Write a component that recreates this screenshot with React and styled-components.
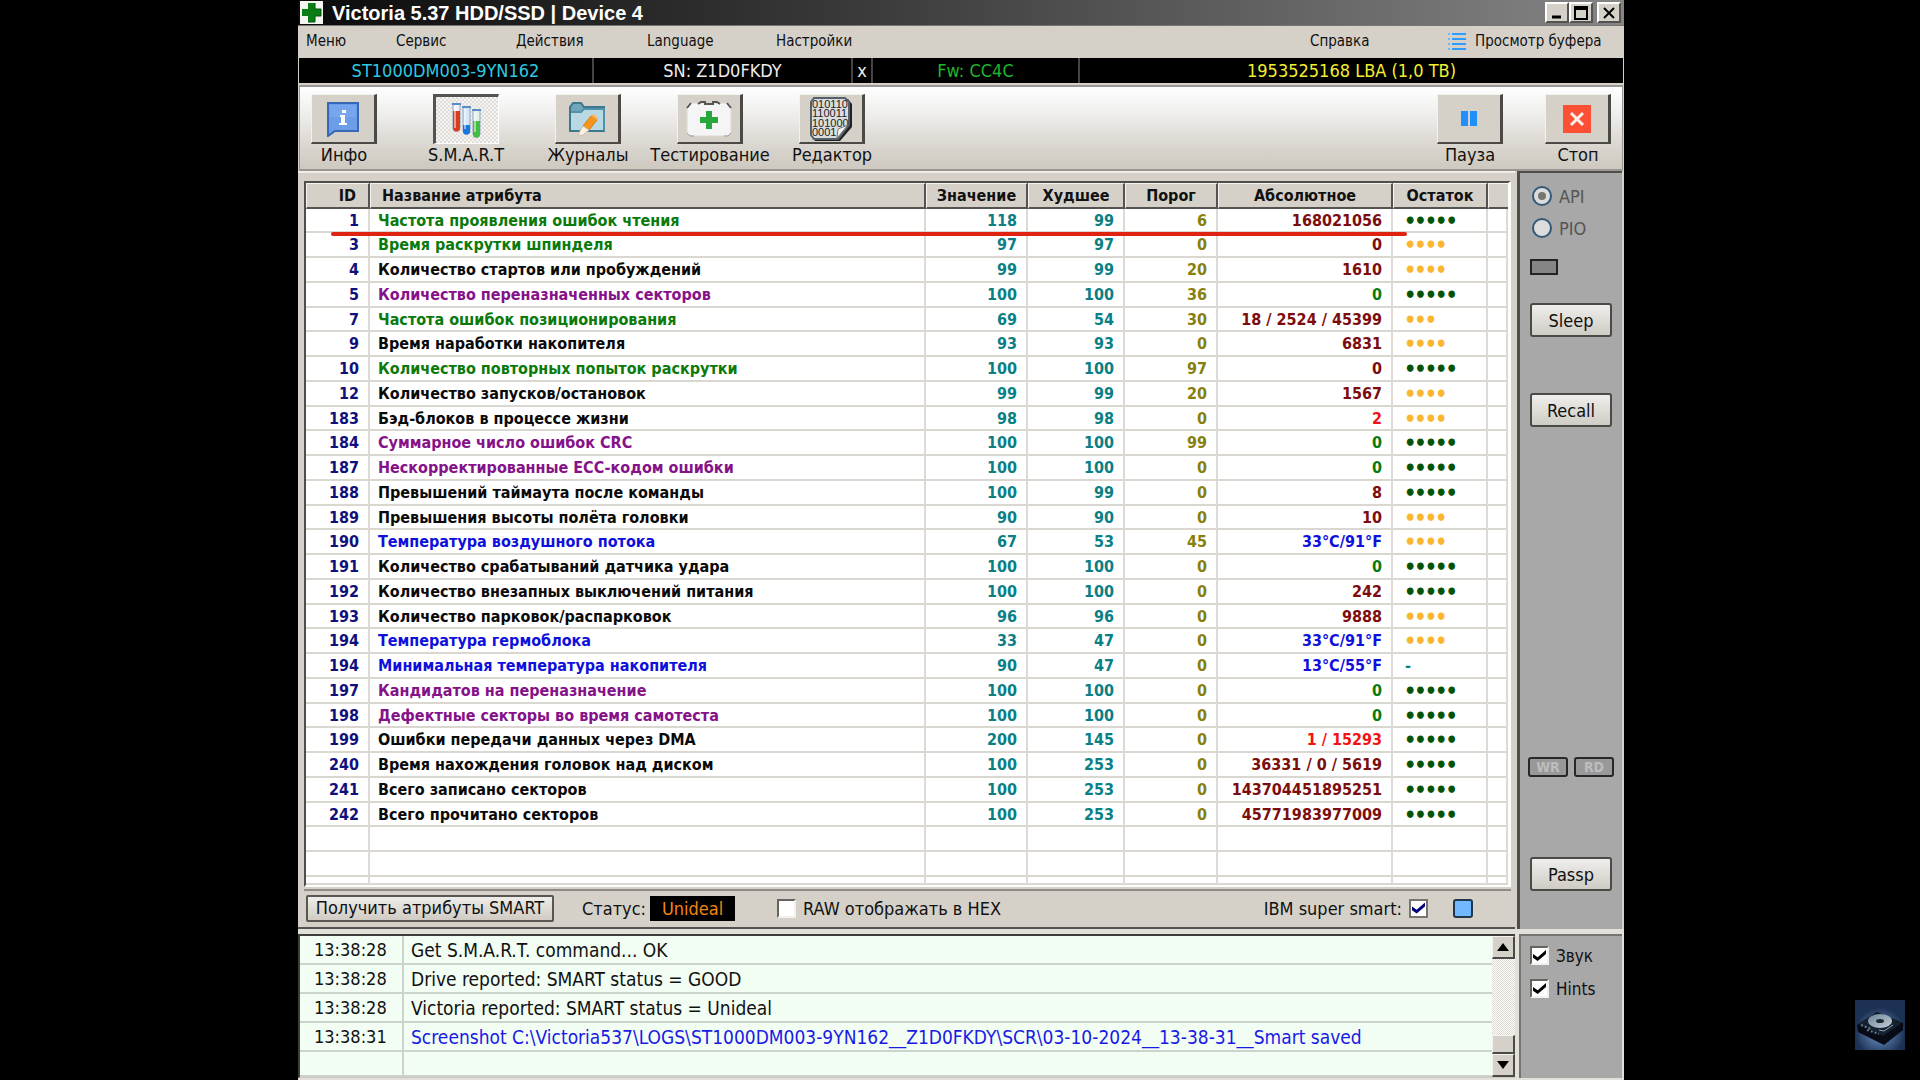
import React from "react";
import styled, { createGlobalStyle, css } from "styled-components";

const GlobalStyle = createGlobalStyle`
  * {
    box-sizing: border-box;
  }
  body {
    margin: 0;
    background: #000;
    color: #111;
    font-family: "DejaVu Sans Condensed", "DejaVu Sans", sans-serif;
    font-size: 18px;
  }
  button, input {
    font: inherit;
    color: inherit;
    margin: 0;
    padding: 0;
  }
`;

const Desktop = styled.div`
  display: grid;
  grid-template-columns: 298px minmax(0, 1fr) 296px;
  min-height: 100vh;
`;

const Window = styled.main`
  grid-column: 2;
  display: flex;
  flex-direction: column;
  background: #d5d1c9;
`;

const Corner = styled.aside`
  display: flex;
  align-items: flex-end;
  justify-content: flex-end;
  padding: 0 15px 30px 0;
`;

/* title bar */

const TitleBar = styled.header`
  display: flex;
  align-items: center;
  height: 26px;
  padding: 0 3px 0 2px;
  background: linear-gradient(90deg, #0b0b0b, #3c3c3c 44%, #858585);
  border-bottom: 1px solid #77756f;
`;

const Title = styled.h1`
  flex: 1;
  margin: 0 0 0 9px;
  color: #fff;
  font-family: "Liberation Sans", Arial, sans-serif;
  font-size: 20px;
  line-height: 24px;
`;

const WinButton = styled.button`
  width: 24px;
  height: 21px;
  margin-left: ${p => (p.$apart ? "4px" : "0")};
  display: grid;
  place-items: center;
  background: #d5d1c9;
  border: 2px solid;
  border-color: #fff #55534f #55534f #fff;
`;

/* menu */

const MenuBar = styled.nav`
  display: grid;
  grid-template-columns: 90px 120px 131px 129px 1fr 137px 177px;
  align-items: center;
  height: 32px;
  padding: 0 0 2px 8px;
`;

const MenuItem = styled.button`
  display: flex;
  align-items: center;
  gap: 9px;
  border: 0;
  background: none;
  font-size: 15px;
  line-height: 20px;
  white-space: nowrap;
`;

/* drive line */

const DriveBar = styled.div`
  display: grid;
  grid-template-columns: 293fr 257fr 18fr 205fr 543fr;
  gap: 2px;
  height: 25px;
  margin: 0 1px;
  background: #444;
`;

const DriveCell = styled.div`
  background: #000;
  color: ${p => p.$color};
  text-align: center;
  line-height: 25px;
`;

const ClearButton = styled.button`
  border: 0;
  background: #000;
  color: #eee;
  line-height: 22px;
`;

/* toolbar */

const Toolbar = styled.div`
  display: flex;
  justify-content: space-between;
  height: 86px;
  margin: 2px 1px 0;
  padding: 7px 11px 0 11px;
  border: solid #9a9894;
  border-width: 2px 1px;
  background: linear-gradient(#fff, #eeedec 35%, #dcd8d2 68%, #cdc9bf);
`;

const ToolGroup = styled.div`
  display: flex;
  gap: ${p => p.$gap}px;
`;

const Tool = styled.label`
  display: flex;
  flex-direction: column;
  align-items: center;
  width: 66px;
  line-height: 21px;
  white-space: nowrap;
`;

const ToolButton = styled.button`
  flex: none;
  display: grid;
  place-items: center;
  width: 66px;
  height: 50px;
  background: #d5d1c9;
  border: solid;
  border-width: 1px 3px 2px 1px;
  border-color: #f4f2ee #4b4a47 #4b4a47 #f4f2ee;
  ${p =>
    p.$down &&
    css`
      background: repeating-conic-gradient(#f4f3f1 0 25%, #e2dfda 0 50%) 0 0 / 4px 4px;
      border-width: 3px 1px 1px 3px;
      border-color: #55534f #fff #fff #55534f;
    `}
`;

/* main part */

const Body = styled.div`
  flex: 1;
  display: flex;
  gap: 2px;
  padding-right: 2px;
`;

const Main = styled.section`
  flex: 1;
  min-width: 0;
  display: flex;
  flex-direction: column;
  border-top: 2px solid #f0ede2;
  border-bottom: 2px solid #55534f;
  padding: 8px 4px 0 6px;
`;

const TableFrame = styled.div`
  position: relative;
  overflow: hidden;
  border: 2px solid;
  border-color: #504e4b #fdfdfb #fdfdfb #504e4b;
  border-right-width: 3px;
  background: #fff;
`;

const Underline = styled.div`
  position: absolute;
  top: 49px;
  left: 25px;
  right: 101px;
  height: 4px;
  border-radius: 2px;
  background: #e02311;
`;

const Table = styled.table`
  width: 100%;
  table-layout: fixed;
  border-collapse: separate;
  border-spacing: 0;
  font-size: 16px;
  font-weight: bold;
`;

const Col = styled.col`
  width: ${p => (p.$w ? `${p.$w}px` : "auto")};
`;

const Th = styled.th`
  height: 26px;
  padding: ${p => p.$pad || "0"};
  text-align: ${p => p.$align || "center"};
  line-height: 20px;
  color: #111;
  background: #d5d1c9;
  border: solid;
  border-width: 1px 2px 2px 1px;
  border-color: #f5f3ef #55534f #55534f #f5f3ef;
  &:last-child {
    border-right: 0;
  }
`;

const Row = styled.tr`
  height: 25px;
  &:nth-child(4n + 1) {
    height: 24px;
  }
  &:last-child {
    height: 8px;
  }
`;

const Td = styled.td`
  padding: ${p => (p.$left ? `1px 0 0 ${p.$left}px` : "1px 9px 0 0")};
  text-align: ${p => (p.$left ? "left" : "right")};
  line-height: 20px;
  white-space: nowrap;
  color: ${p => p.$color};
  border-right: 2px solid #dedbd6;
  border-bottom: 2px solid #dad7d1;
`;

const Dots = styled.span`
  display: block;
  font-size: 18px;
  line-height: 20px;
  -webkit-text-stroke: 1px currentColor;
`;

const Strip = styled.div`
  display: flex;
  align-items: center;
  height: 36px;
  margin-top: 2px;
  border-top: 2px solid #8f8d88;
  white-space: nowrap;
`;

const GetButton = styled.button`
  height: 27px;
  width: 248px;
  margin-left: 2px;
  border: 2px solid #595753;
  border-radius: 2px;
  background: linear-gradient(#efedea, #cfcbc3);
  line-height: 22px;
`;

const Status = styled.div`
  display: flex;
  align-items: center;
  gap: 4px;
  margin-left: 28px;
`;

const StatusValue = styled.output`
  width: 85px;
  background: #000;
  color: #f58410;
  text-align: center;
  line-height: 25px;
`;

const RawLabel = styled.label`
  flex: 1;
  display: flex;
  align-items: center;
  gap: 7px;
  margin-left: 42px;
`;

const SuperLabel = styled.label`
  display: flex;
  align-items: center;
  gap: 7px;
`;

const Check = styled.input`
  appearance: none;
  flex: none;
  display: grid;
  place-items: center;
  width: 19px;
  height: 19px;
  background: #fff;
  border: 2px solid;
  border-color: ${p =>
    p.$flat ? "#77756f" : "#66645f #f3f1ee #f3f1ee #66645f"};
  &:checked::before {
    content: "";
    width: 13px;
    height: 11px;
    background: ${p => (p.$flat ? "#00007c" : "#000")};
    clip-path: polygon(0 36%, 36% 66%, 100% 0, 100% 36%, 36% 100%, 0 70%);
  }
`;

const BlueButton = styled.button`
  width: 20px;
  height: 19px;
  margin: 0 38px 0 25px;
  border: 2px solid #20384e;
  border-radius: 3px;
  background: #72b8ff;
`;

/* right column */

const Side = styled.aside`
  width: 105px;
  display: flex;
  flex-direction: column;
  padding: 7px 10px 0 10px;
  background: #a8a8a8;
  border: solid #4e4d4b;
  border-width: 2px 0 0 3px;
`;

const RadioLabel = styled.label`
  display: flex;
  align-items: center;
  gap: 7px;
  height: 32px;
  padding-left: 2px;
  color: #555;
`;

const Radio = styled.input`
  appearance: none;
  display: grid;
  place-items: center;
  width: 20px;
  height: 20px;
  border: 2px solid #31587a;
  border-radius: 50%;
  background: #dcdcda;
  &:checked::before {
    content: "";
    width: 8px;
    height: 8px;
    border-radius: 50%;
    background: #77756f;
  }
`;

const Led = styled.div`
  width: 28px;
  height: 16px;
  margin: 15px 0 28px;
  border: 2px solid #222;
  background: #858585;
`;

const SideButton = styled.button`
  height: 34px;
  margin-bottom: ${p => p.$after || 0}px;
  border: 2px solid #4b4a47;
  border-radius: 3px;
  background: linear-gradient(#efeeeb, #cfccc5);
`;

const Lamps = styled.div`
  display: flex;
  justify-content: space-between;
  margin: auto -2px 80px -2px;
`;

const Lamp = styled.span`
  width: 40px;
  height: 20px;
  border: 2px solid #27282a;
  border-radius: 3px;
  background: #999;
  color: #bdbdbd;
  font-size: 14px;
  font-weight: bold;
  line-height: 17px;
  text-align: center;
`;

/* log */

const Bottom = styled.div`
  display: flex;
  gap: 4px;
  height: 151px;
  padding: 5px 2px 2px 0;
  background: #e3e0da;
`;

const LogFrame = styled.section`
  flex: 1;
  min-width: 0;
  display: flex;
  border: 2px solid #3f3e3c;
  border-right-width: 0;
  border-bottom: 1px solid #c9c6bf;
  background: #f2fdf4;
`;

const LogTable = styled.table`
  flex: 1;
  width: 100%;
  table-layout: fixed;
  border-collapse: separate;
  border-spacing: 0;
`;

const LogRow = styled.tr`
  height: ${p => (p.$short ? 25 : 29)}px;
`;

const LogCell = styled.td`
  padding: 0 0 0 ${p => (p.$time ? 14 : 7)}px;
  border-bottom: 2px solid #ccd3cc;
  border-right: ${p => (p.$time ? "2px solid #ccd3cc" : "0")};
  color: ${p => (p.$link ? "#1a1ae6" : "#111")};
  font-size: ${p => (p.$time ? 18 : 19)}px;
  line-height: 22px;
  white-space: nowrap;
`;

const Scroll = styled.div`
  display: flex;
  flex-direction: column;
  width: 23px;
  background: repeating-conic-gradient(#fff 0 25%, #dcd9d3 0 50%) 0 0 / 2px 2px;
`;

const ScrollButton = styled.button`
  height: ${p => (p.$thumb ? 19 : 23)}px;
  margin-top: ${p => (p.$thumb ? "auto" : "0")};
  display: grid;
  place-items: center;
  background: #d5d1c9;
  border: solid;
  border-width: 1px 2px 2px 1px;
  border-color: #f5f3ef #4b4a47 #4b4a47 #f5f3ef;
`;

const Options = styled.aside`
  width: 103px;
  padding: 3px 0 0 9px;
  background: #a8a8a8;
  border: solid #77756f;
  border-width: 2px 0 0 2px;
`;

const OptionLabel = styled.label`
  display: flex;
  align-items: center;
  gap: 7px;
  height: 33px;
  font-size: 17px;
`;

/* drawings */

const CrossIcon = () => (
  <svg width="23" height="23" viewBox="0 0 23 23">
    <rect width="23" height="23" fill="#f3f5f0" />
    <path d="M8 2h7v6h6v7h-6v6H8v-6H2V8h6z" fill="#0a7d16" />
    <path d="M15 2v6h6v7h-6v6H8" fill="none" stroke="#045009" />
  </svg>
);

const ListIcon = () => (
  <svg width="19" height="19" viewBox="0 0 19 19">
    <path d="M5 2h14M5 7h14M5 12h14M5 17h14" stroke="#2d9bff" strokeWidth="2" />
    <path d="M1 2h2M1 7h2M1 12h2M1 17h2" stroke="#6bbcff" strokeWidth="2" />
  </svg>
);

const InfoIcon = () => (
  <svg width="34" height="36" viewBox="0 0 34 36">
    <path d="M2 2h30v28H9l-7 5z" fill="#6b9de8" stroke="#3568b5" strokeWidth="2" />
    <path d="M4 4h26v12H4z" fill="#85b0f0" opacity=".5" />
    <path d="M16 9h4v3h-4zM14 14h5v8h2v2h-8v-2h2v-6h-1z" fill="#fff" />
  </svg>
);

const TubesIcon = () => (
  <svg width="32" height="38" viewBox="0 0 32 38">
    <g stroke="#90a5bd">
      <path d="M2 3h7v24a3 3 0 0 1-7 0z" fill="#eef3fa" />
      <path d="M12 6h7v24a3 3 0 0 1-7 0z" fill="#d5e7fb" />
      <path d="M22 9h7v24a3 3 0 0 1-7 0z" fill="#e4f1ea" />
    </g>
    <path d="M2 10h7v17a3 3 0 0 1-7 0z" fill="#d93a20" />
    <path d="M12 24h7v6a3 3 0 0 1-7 0z" fill="#1877dc" />
    <path d="M22 20h7v13a3 3 0 0 1-7 0z" fill="#40bd42" />
    <path d="M4 5v22M14 8v20M24 11v20" stroke="#fff" strokeWidth="2" opacity=".5" />
    <path d="M1 3h9M11 6h9M21 9h9" stroke="#5b8cc8" strokeWidth="2" />
  </svg>
);

const FolderIcon = () => (
  <svg width="38" height="38" viewBox="0 0 38 38">
    <path d="M2 31V7l3-4h8l3 4h20v24z" fill="#70a5ba" stroke="#3d788f" strokeWidth="2" />
    <path d="M3 12h10l3-3h19v21H3z" fill="#b8d9e4" />
    <path d="M3 12h10l3-3h20v22" fill="none" stroke="#5291aa" strokeWidth="2" />
    <path d="M15 26l8-10 6 4-8 10z" fill="#f6951e" stroke="#d87907" />
    <path d="M23 16l2-2 5 4-1 2z" fill="#ffb14d" />
    <path d="M15 26l6 4-6 5-5 1 2-5z" fill="#fff1de" stroke="#c8bdb0" />
  </svg>
);

const KitIcon = () => (
  <svg width="48" height="38" viewBox="0 0 48 38">
    <rect x="2" y="3" width="44" height="33" rx="4" fill="#f5f5f5" stroke="#dad8d4" />
    <path d="M2 8l4-5M46 8l-4-5M13 4l3-2h5M27 2h5l3 2M19 4h10" fill="none" stroke="#555" strokeWidth="2" />
    <path d="M2 33l3 3h4M46 33l-3 3h-4" stroke="#999" fill="none" />
    <path d="M21 11h6v6h6v6h-6v6h-6v-6h-6v-6h6z" fill="#28a83b" />
  </svg>
);

const BinaryIcon = () => (
  <svg width="44" height="46" viewBox="0 0 44 46">
    <path d="M6 3h33l4 5v23L31 45H6l-3-5V8z" fill="#222" />
    <path d="M5 2h31l4 4v23L29 43H5l-3-4V6z" fill="#dcdcdc" stroke="#55606a" strokeWidth="2" />
    <g fontFamily="Liberation Sans" fontSize="11" fill="#222">
      <text x="3" y="12">010110</text>
      <text x="3" y="21">110011</text>
      <text x="3" y="31">101000</text>
      <text x="3" y="40">0001</text>
    </g>
    <path d="M28 42l1-9 10-4z" fill="#f6f6f6" stroke="#777" />
  </svg>
);

const PauseIcon = () => (
  <svg width="16" height="15" viewBox="0 0 16 15">
    <path d="M0 0h7v15H0zM9 0h7v15H9z" fill="#1e8ffb" />
  </svg>
);

const StopIcon = () => (
  <svg width="28" height="28" viewBox="0 0 28 28">
    <rect width="28" height="28" fill="#fb5033" />
    <path d="M8 8l12 12M20 8L8 20" stroke="#f7efe9" strokeWidth="3" />
  </svg>
);

const DriveLogo = () => (
  <svg width="50" height="50" viewBox="0 0 50 50">
    <defs>
      <radialGradient id="glow" cx="50%" cy="65%">
        <stop offset="0" stopColor="#6f9bd0" />
        <stop offset="1" stopColor="#1d3153" />
      </radialGradient>
      <linearGradient id="disc" x2="1" y2="1">
        <stop offset="0" stopColor="#6b8598" />
        <stop offset="1" stopColor="#c3ced6" />
      </linearGradient>
    </defs>
    <rect width="50" height="50" fill="url(#glow)" />
    <path d="M2 25l20-13 26 11v7L29 45 3 32z" fill="#060b16" />
    <path d="M3 24l19-11 25 10-19 13z" fill="#16212f" />
    <path d="M6 25l10 4M12 30l12 4" stroke="#62798d" strokeWidth="2" strokeDasharray="2 2" />
    <ellipse cx="25" cy="21" rx="12" ry="7" fill="url(#disc)" />
    <ellipse cx="25" cy="21" rx="4" ry="2" fill="#1b2836" />
    <path d="M38 25l-9 6-5-1" stroke="#8fa2b2" fill="none" />
  </svg>
);

const GREEN = "#0b7a0b";
const BLACK = "#0a0a0a";
const PURPLE = "#86128a";
const BLUE = "#1010dc";
const MAROON = "#7d0c0c";
const RED = "#f01414";

// id, name, name colour, value, worst, threshold, raw, raw colour, health dots
const attributes = [
  [1, "Частота проявления ошибок чтения", GREEN, 118, 99, 6, "168021056", MAROON, 5],
  [3, "Время раскрутки шпинделя", GREEN, 97, 97, 0, "0", MAROON, 4],
  [4, "Количество стартов или пробуждений", BLACK, 99, 99, 20, "1610", MAROON, 4],
  [5, "Количество переназначенных секторов", PURPLE, 100, 100, 36, "0", GREEN, 5],
  [7, "Частота ошибок позиционирования", GREEN, 69, 54, 30, "18 / 2524 / 45399", MAROON, 3],
  [9, "Время наработки накопителя", BLACK, 93, 93, 0, "6831", MAROON, 4],
  [10, "Количество повторных попыток раскрутки", GREEN, 100, 100, 97, "0", MAROON, 5],
  [12, "Количество запусков/остановок", BLACK, 99, 99, 20, "1567", MAROON, 4],
  [183, "Бэд-блоков в процессе жизни", BLACK, 98, 98, 0, "2", RED, 4],
  [184, "Суммарное число ошибок CRC", PURPLE, 100, 100, 99, "0", GREEN, 5],
  [187, "Нескорректированные ECC-кодом ошибки", PURPLE, 100, 100, 0, "0", GREEN, 5],
  [188, "Превышений таймаута после команды", BLACK, 100, 99, 0, "8", MAROON, 5],
  [189, "Превышения высоты полёта головки", BLACK, 90, 90, 0, "10", MAROON, 4],
  [190, "Температура воздушного потока", BLUE, 67, 53, 45, "33°C/91°F", BLUE, 4],
  [191, "Количество срабатываний датчика удара", BLACK, 100, 100, 0, "0", GREEN, 5],
  [192, "Количество внезапных выключений питания", BLACK, 100, 100, 0, "242", MAROON, 5],
  [193, "Количество парковок/распарковок", BLACK, 96, 96, 0, "9888", MAROON, 4],
  [194, "Температура гермоблока", BLUE, 33, 47, 0, "33°C/91°F", BLUE, 4],
  [194, "Минимальная температура накопителя", BLUE, 90, 47, 0, "13°C/55°F", BLUE, 0],
  [197, "Кандидатов на переназначение", PURPLE, 100, 100, 0, "0", GREEN, 5],
  [198, "Дефектные секторы во время самотеста", PURPLE, 100, 100, 0, "0", GREEN, 5],
  [199, "Ошибки передачи данных через DMA", BLACK, 200, 145, 0, "1 / 15293", RED, 5],
  [240, "Время нахождения головок над диском", BLACK, 100, 253, 0, "36331 / 0 / 5619", MAROON, 5],
  [241, "Всего записано секторов", BLACK, 100, 253, 0, "143704451895251", MAROON, 5],
  [242, "Всего прочитано секторов", BLACK, 100, 253, 0, "45771983977009", MAROON, 5]
];

const logLines = [
  ["13:38:28", "Get S.M.A.R.T. command... OK"],
  ["13:38:28", "Drive reported: SMART status = GOOD"],
  ["13:38:28", "Victoria reported: SMART status = Unideal"],
  [
    "13:38:31",
    "Screenshot C:\\Victoria537\\LOGS\\ST1000DM003-9YN162__Z1D0FKDY\\SCR\\03-10-2024__13-38-31__Smart saved",
    true
  ]
];

const tools = [
  ["info", "Инфо", InfoIcon],
  ["smart", "S.M.A.R.T", TubesIcon],
  ["logs", "Журналы", FolderIcon],
  ["test", "Тестирование", KitIcon],
  ["editor", "Редактор", BinaryIcon]
];

const health = count => {
  if (!count) return "-";
  return <Dots>{"•".repeat(count)}</Dots>;
};

const healthColor = count => {
  if (!count) return "#0a7f86";
  return count === 5 ? "#045204" : "#fbb62f";
};

const EmptyRow = () => (
  <Row>
    {[0, 1, 2, 3, 4, 5, 6, 7].map(i => (
      <Td key={i} />
    ))}
  </Row>
);

const SmartTable = () => (
  <TableFrame>
    <Table>
      <colgroup>
        <Col $w={64} />
        <Col />
        <Col $w={102} />
        <Col $w={97} />
        <Col $w={93} />
        <Col $w={175} />
        <Col $w={95} />
        <Col $w={20} />
      </colgroup>
      <thead>
        <tr>
          <Th $align="right" $pad="0 12px 0 0">ID</Th>
          <Th $align="left" $pad="0 0 0 11px">Название атрибута</Th>
          <Th>Значение</Th>
          <Th>Худшее</Th>
          <Th>Порог</Th>
          <Th>Абсолютное</Th>
          <Th>Остаток</Th>
          <Th />
        </tr>
      </thead>
      <tbody>
        {attributes.map(([id, name, color, value, worst, limit, raw, rawColor, dots], i) => (
          <Row key={i}>
            <Td $color="#10107c">{id}</Td>
            <Td $left={8} $color={color}>{name}</Td>
            <Td $color="#0a7f86">{value}</Td>
            <Td $color="#0a7f86">{worst}</Td>
            <Td $color="#85800f">{limit}</Td>
            <Td $color={rawColor}>{raw}</Td>
            <Td $left={12} $color={healthColor(dots)}>{health(dots)}</Td>
            <Td />
          </Row>
        ))}
        <EmptyRow />
        <EmptyRow />
        <EmptyRow />
      </tbody>
    </Table>
    <Underline />
  </TableFrame>
);

const App = () => (
  <Desktop>
    <GlobalStyle />
    <Window>
      <TitleBar>
        <CrossIcon />
        <Title>Victoria 5.37 HDD/SSD | Device 4</Title>
        <WinButton aria-label="Свернуть">
          <svg width="14" height="14"><path d="M2 11h9" stroke="#000" strokeWidth="3" /></svg>
        </WinButton>
        <WinButton aria-label="Развернуть">
          <svg width="14" height="14">
            <path d="M1 1h12v12H1zM1 3h12" fill="none" stroke="#000" strokeWidth="2" />
          </svg>
        </WinButton>
        <WinButton $apart aria-label="Закрыть">
          <svg width="14" height="14">
            <path d="M2 2l10 10M12 2L2 12" stroke="#000" strokeWidth="2" />
          </svg>
        </WinButton>
      </TitleBar>

      <MenuBar>
        <MenuItem>Меню</MenuItem>
        <MenuItem>Сервис</MenuItem>
        <MenuItem>Действия</MenuItem>
        <MenuItem>Language</MenuItem>
        <MenuItem>Настройки</MenuItem>
        <MenuItem>Справка</MenuItem>
        <MenuItem>
          <ListIcon />
          Просмотр буфера
        </MenuItem>
      </MenuBar>

      <DriveBar>
        <DriveCell $color="#2fc8e0">ST1000DM003-9YN162</DriveCell>
        <DriveCell $color="#ececec">SN: Z1D0FKDY</DriveCell>
        <ClearButton>x</ClearButton>
        <DriveCell $color="#1fb52c">Fw: CC4C</DriveCell>
        <DriveCell $color="#f2ee30">1953525168 LBA (1,0 TB)</DriveCell>
      </DriveBar>

      <Toolbar>
        <ToolGroup $gap={56}>
          {tools.map(([id, text, Icon]) => (
            <Tool key={id} htmlFor={id}>
              <ToolButton id={id} $down={id === "smart"}>
                <Icon />
              </ToolButton>
              {text}
            </Tool>
          ))}
        </ToolGroup>
        <ToolGroup $gap={42}>
          <Tool htmlFor="pause">
            <ToolButton id="pause"><PauseIcon /></ToolButton>
            Пауза
          </Tool>
          <Tool htmlFor="stop">
            <ToolButton id="stop"><StopIcon /></ToolButton>
            Стоп
          </Tool>
        </ToolGroup>
      </Toolbar>

      <Body>
        <Main>
          <SmartTable />
          <Strip>
            <GetButton>Получить атрибуты SMART</GetButton>
            <Status>
              Статус:
              <StatusValue>Unideal</StatusValue>
            </Status>
            <RawLabel>
              <Check type="checkbox" />
              RAW отображать в HEX
            </RawLabel>
            <SuperLabel>
              IBM super smart:
              <Check type="checkbox" $flat defaultChecked />
            </SuperLabel>
            <BlueButton aria-label="Цвет" />
          </Strip>
        </Main>
        <Side>
          <RadioLabel>
            <Radio type="radio" name="mode" defaultChecked />
            API
          </RadioLabel>
          <RadioLabel>
            <Radio type="radio" name="mode" />
            PIO
          </RadioLabel>
          <Led />
          <SideButton $after={56}>Sleep</SideButton>
          <SideButton>Recall</SideButton>
          <Lamps>
            <Lamp>WR</Lamp>
            <Lamp>RD</Lamp>
          </Lamps>
          <SideButton $after={38}>Passp</SideButton>
        </Side>
      </Body>

      <Bottom>
        <LogFrame>
          <LogTable>
            <colgroup>
              <Col $w={104} />
              <Col />
            </colgroup>
            <tbody>
              {logLines.map(([time, text, link], i) => (
                <LogRow key={i}>
                  <LogCell $time>{time}</LogCell>
                  <LogCell $link={link}>{text}</LogCell>
                </LogRow>
              ))}
              <LogRow $short>
                <LogCell $time />
                <LogCell />
              </LogRow>
            </tbody>
          </LogTable>
          <Scroll>
            <ScrollButton aria-label="Вверх">
              <svg width="12" height="8"><path d="M6 0l6 8H0z" /></svg>
            </ScrollButton>
            <ScrollButton $thumb aria-label="Прокрутка" />
            <ScrollButton aria-label="Вниз">
              <svg width="12" height="8"><path d="M0 0h12L6 8z" /></svg>
            </ScrollButton>
          </Scroll>
        </LogFrame>
        <Options>
          <OptionLabel>
            <Check type="checkbox" defaultChecked />
            Звук
          </OptionLabel>
          <OptionLabel>
            <Check type="checkbox" defaultChecked />
            Hints
          </OptionLabel>
        </Options>
      </Bottom>
    </Window>
    <Corner>
      <DriveLogo />
    </Corner>
  </Desktop>
);

export default App;
